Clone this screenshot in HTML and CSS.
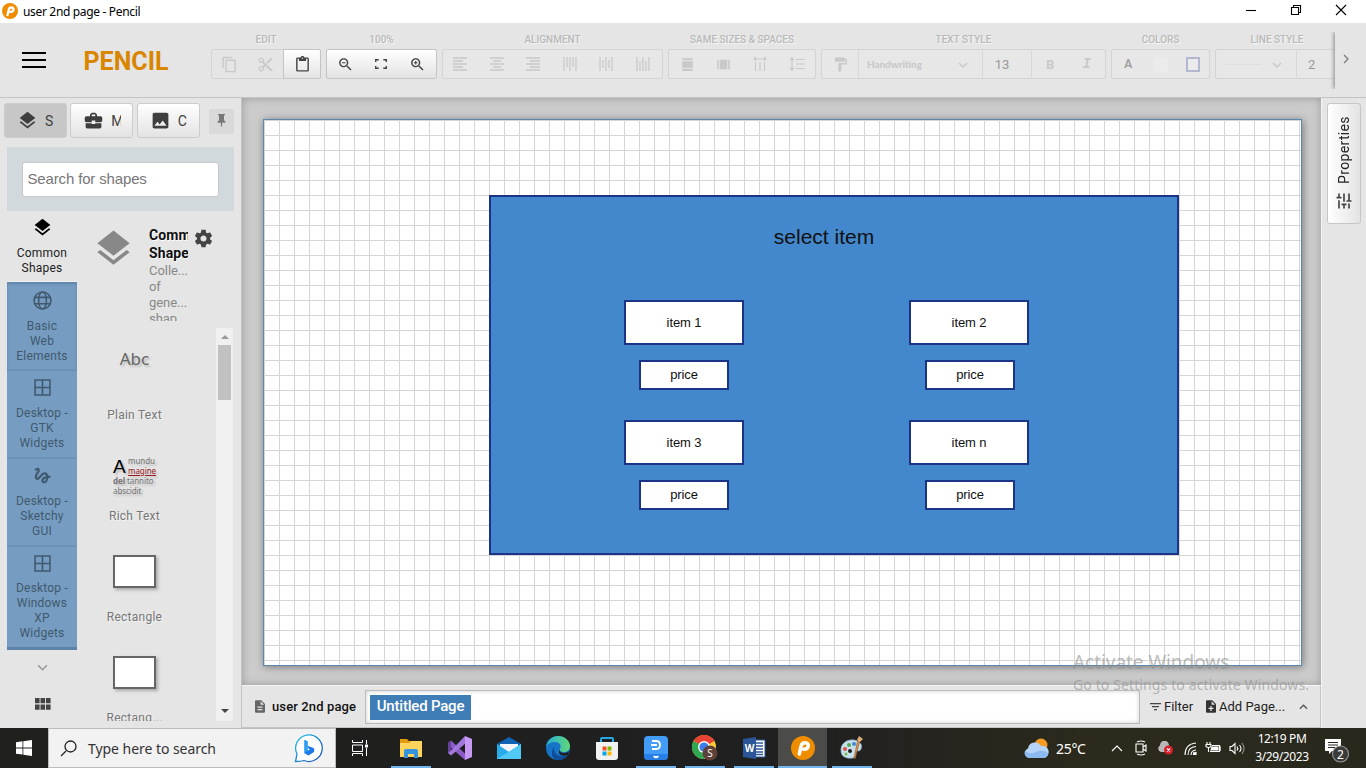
FILE: index.html
```html
<!DOCTYPE html>
<html lang="en">
<head>
<meta charset="utf-8">
<title>user 2nd page - Pencil</title>
<link rel="stylesheet" href="styles.css">
</head>
<body>
<svg class="defs" width="0" height="0">
  <symbol id="layers" viewBox="0 0 24 24"><path d="M11.99 18.54l-7.37-5.73L3 14.07l9 7 9-7-1.63-1.27-7.38 5.74zM12 16l7.36-5.73L21 9l-9-7-9 7 1.63 1.27L12 16z"/></symbol>
  <symbol id="logo" viewBox="0 0 24 24"><circle cx="12" cy="12" r="12" fill="#f08c00"/><path d="M8.300 18L10 10.500C10.500 8 11.800 6.800 14 6.800C16.500 6.800 17.600 8.200 17.200 10.200C16.800 12.400 15 13.500 12.500 13.200" fill="none" stroke="#fff" stroke-width="3.500" stroke-linecap="round"/></symbol>
  <symbol id="grid4" viewBox="0 0 16 16"><path d="M1 1h14v14H1zM8 1v14M1 8h14" fill="none" stroke="currentColor" stroke-width="1.500"/></symbol>
  <symbol id="down" viewBox="0 0 10 6"><path d="M1 1l4 4 4-4" fill="none" stroke="currentColor" stroke-width="1.400"/></symbol>
</svg>

<header class="titlebar">
  <svg class="title-logo"><use href="#logo"/></svg>
  <span class="title-text">user 2nd page - Pencil</span>
  <div class="window-buttons">
    <svg viewBox="0 0 12 12"><path d="M1 6.500h10"/></svg>
    <svg viewBox="0 0 12 12"><path d="M1.500 3.500h7v7h-7zM3.500 3v-1.500h7v7H9"/></svg>
    <svg viewBox="0 0 12 12"><path d="M1 1l10 10M11 1L1 11"/></svg>
  </div>
</header>

<nav class="toolbar">
  <svg class="hamburger" viewBox="0 0 24 16"><path d="M0 1h24M0 8h24M0 15h24" stroke="#000" stroke-width="2"/></svg>
  <div class="brand">PENCIL</div>
  <div class="groups">
    <section class="group w-edit"><h2>EDIT</h2>
      <div class="buttons">
        <span class="btn faded"><svg viewBox="0 0 24 24"><path d="M16 1H4c-1.100 0-2 .9-2 2v14h2V3h12V1zm3 4H8c-1.100 0-2 .9-2 2v14c0 1.100.9 2 2 2h11c1.100 0 2-.9 2-2V7c0-1.100-.9-2-2-2zm0 16H8V7h11v14z"/></svg></span>
        <span class="btn faded"><svg viewBox="0 0 24 24"><path d="M9.640 7.640c.23-.5.36-1.050.36-1.640 0-2.210-1.790-4-4-4S2 3.790 2 6s1.790 4 4 4c.59 0 1.140-.13 1.640-.36L10 12l-2.360 2.360C7.140 14.130 6.590 14 6 14c-2.210 0-4 1.790-4 4s1.790 4 4 4 4-1.790 4-4c0-.59-.13-1.140-.36-1.640L12 14l7 7h3v-1L9.640 7.640zM6 8c-1.100 0-2-.89-2-2s.9-2 2-2 2 .89 2 2-.9 2-2 2zm0 12c-1.100 0-2-.89-2-2s.9-2 2-2 2 .89 2 2-.9 2-2 2zM19 3l-6 6 2 2 7-7V3z"/></svg></span>
        <span class="btn raised"><svg viewBox="0 0 24 24"><path d="M19 2h-4.180C14.400.84 13.300 0 12 0c-1.300 0-2.400.84-2.820 2H5c-1.100 0-2 .9-2 2v16c0 1.100.9 2 2 2h14c1.100 0 2-.9 2-2V4c0-1.100-.9-2-2-2zm-7 0c.55 0 1 .45 1 1s-.45 1-1 1-1-.45-1-1 .45-1 1-1zm7 18H5V4h2v3h10V4h2v16z"/></svg></span>
      </div>
    </section>
    <section class="group w-zoom"><h2>100%</h2>
      <div class="buttons lit">
        <span class="btn"><svg viewBox="0 0 24 24"><path d="M15.500 14h-.79l-.28-.27C15.410 12.590 16 11.110 16 9.500 16 5.910 13.090 3 9.500 3S3 5.910 3 9.500 5.910 16 9.500 16c1.610 0 3.090-.59 4.230-1.570l.27.28v.79l5 4.990L20.490 19l-4.990-5zm-6 0C7.010 14 5 11.990 5 9.500S7.010 5 9.500 5 14 7.010 14 9.500 11.990 14 9.500 14zM7 8.700h5v1.600H7z"/></svg></span>
        <span class="btn"><svg class="fit" viewBox="0 0 12 10"><path d="M.700 3V.700h3M8.300.700h3V3M11.300 7v2.300h-3M3.700 9.300h-3V7"/></svg></span>
        <span class="btn"><svg viewBox="0 0 24 24"><path d="M15.500 14h-.79l-.28-.27C15.410 12.590 16 11.110 16 9.500 16 5.910 13.090 3 9.500 3S3 5.910 3 9.500 5.910 16 9.500 16c1.610 0 3.090-.59 4.230-1.570l.27.28v.79l5 4.990L20.490 19l-4.990-5zm-6 0C7.010 14 5 11.990 5 9.500S7.010 5 9.500 5 14 7.010 14 9.500 11.990 14 9.500 14zM7 8.700h5v1.600H7zM8.700 7h1.600v5H8.700z"/></svg></span>
      </div>
    </section>
    <section class="group w-align faded"><h2>ALIGNMENT</h2>
      <div class="buttons">
        <span class="btn"><svg class="px" viewBox="0 0 14 14"><path d="M0 1h14M0 4h10M0 7h14M0 10h10M0 13h14"/></svg></span>
        <span class="btn"><svg class="px" viewBox="0 0 14 14"><path d="M0 1h14M3 4h8M0 7h14M3 10h8M0 13h14"/></svg></span>
        <span class="btn"><svg class="px" viewBox="0 0 14 14"><path d="M0 1h14M4 4h10M0 7h14M4 10h10M0 13h14"/></svg></span>
        <span class="btn"><svg class="px" viewBox="0 0 14 14"><path d="M1 0v14M4 0v10M7 0v14M10 0v10M13 0v14"/></svg></span>
        <span class="btn"><svg class="px" viewBox="0 0 14 14"><path d="M1 0v14M4 3v8M7 0v14M10 3v8M13 0v14"/></svg></span>
        <span class="btn"><svg class="px" viewBox="0 0 14 14"><path d="M1 0v14M4 4v10M7 0v14M10 4v10M13 0v14"/></svg></span>
      </div>
    </section>
    <section class="group w-same faded"><h2>SAME SIZES &amp; SPACES</h2>
      <div class="buttons">
        <span class="btn"><svg viewBox="0 0 16 16"><path d="M3 2h10v2H3zM3 5h10v6H3zM3 12h10v2H3z"/></svg></span>
        <span class="btn"><svg viewBox="0 0 16 16"><path d="M2 3.500h1.500v9H2zM4.500 3.500h7v9h-7zM12.500 3.500H14v9h-1.500z"/></svg></span>
        <span class="btn"><svg class="thin" viewBox="0 0 16 16"><path d="M3.500 6v9M8 6v9M12.500 6v9M2 3h12M4 1L2 3l2 2M12 1l2 2-2 2"/></svg></span>
        <span class="btn"><svg class="thin" viewBox="0 0 16 16"><path d="M7 3.500h9M7 8h9M7 12.500h9M3 2v12M1 4l2-2 2 2M1 12l2 2 2-2"/></svg></span>
      </div>
    </section>
    <section class="group w-text faded"><h2>TEXT STYLE</h2>
      <div class="buttons">
        <span class="btn cell-paint"><svg viewBox="0 0 24 24"><path d="M18 4V3c0-.55-.45-1-1-1H5c-.55 0-1 .45-1 1v4c0 .55.45 1 1 1h12c.55 0 1-.45 1-1V6h1v4H9v11c0 .55.45 1 1 1h2c.55 0 1-.45 1-1v-9h8V4h-3z"/></svg></span>
        <span class="btn cell-font"><span class="font-name">Handwriting</span><svg class="chev"><use href="#down"/></svg></span>
        <span class="btn cell-size">13</span>
        <span class="btn glyph bold">B</span>
        <span class="btn glyph italic">I</span>
      </div>
    </section>
    <section class="group w-colors faded"><h2>COLORS</h2>
      <div class="buttons">
        <span class="btn glyph letter-a">A</span>
        <span class="btn"><i class="swatch"></i></span>
        <span class="btn"><i class="swatch outlined"></i></span>
      </div>
    </section>
    <section class="group w-line faded"><h2>LINE STYLE</h2>
      <div class="buttons">
        <span class="btn cell-line"><i class="line"></i><svg class="chev"><use href="#down"/></svg></span>
        <span class="btn cell-two">2</span>
      </div>
    </section>
  </div>
  <div class="more"><svg viewBox="0 0 6 10"><path d="M1 1l4 4-4 4"/></svg></div>
</nav>

<main class="workspace">
  <aside class="left">
    <div class="tabs">
      <span class="tab active"><svg><use href="#layers"/></svg><b>S</b></span>
      <span class="tab"><svg viewBox="0 0 24 24"><path d="M10 16v-1H3.010L3 19c0 1.110.89 2 2 2h14c1.110 0 2-.89 2-2v-4h-7v1h-4zm10-9h-4.010V5l-2-2h-4l-2 2v2H4c-1.100 0-2 .9-2 2v3c0 1.110.89 2 2 2h6v-2h4v2h6c1.100 0 2-.9 2-2V9c0-1.100-.9-2-2-2zm-6 0h-4V5h4v2z"/></svg><b>M</b></span>
      <span class="tab"><svg viewBox="0 0 24 24"><path d="M21 19V5c0-1.100-.9-2-2-2H5c-1.100 0-2 .9-2 2v14c0 1.100.9 2 2 2h14c1.100 0 2-.9 2-2zM8.500 13.500l2.500 3.010L14.500 12l4.500 6H5l3.500-4.500z"/></svg><b>C</b></span>
      <span class="pin"><svg viewBox="0 0 9 13"><path d="M1 0h7v1.300H7v5l1.500 1.500v.9H5.100V12l-.6 1-.6-1V8.700H.5v-.9L2 6.300v-5H1z"/></svg></span>
    </div>
    <div class="search"><div class="field">Search for shapes</div></div>
    <div class="library">
      <div class="categories">
        <div class="cat current"><svg><use href="#layers"/></svg>Common<br>Shapes</div>
        <div class="cat web"><svg viewBox="0 0 18 18"><g fill="none" stroke="currentColor" stroke-width="1.500"><circle cx="9" cy="9" r="8"/><ellipse cx="9" cy="9" rx="3.700" ry="8"/><path d="M1.700 6h14.600M1.700 12h14.600"/></g></svg>Basic<br>Web<br>Elements</div>
        <div class="cat"><svg><use href="#grid4"/></svg>Desktop -<br>GTK<br>Widgets</div>
        <div class="cat sketch"><svg viewBox="0 0 24 24"><path d="M4.590 6.890c.7-.71 1.400-1.350 1.710-1.220.5.2 0 1.030-.3 1.520-.25.42-2.860 3.890-2.860 6.310 0 1.280.48 2.340 1.340 2.980.75.56 1.740.73 2.640.46 1.070-.31 1.950-1.400 3.060-2.770 1.210-1.490 2.830-3.440 4.080-3.440 1.630 0 1.650 1.010 1.760 1.790-3.780.64-5.380 3.670-5.380 5.370 0 1.700 1.440 3.090 3.210 3.090 1.630 0 4.290-1.330 4.690-6.100H21v-2.500h-2.470c-.15-1.650-1.090-4.200-4.030-4.200-2.250 0-4.180 1.910-4.940 2.840-.58.73-2.060 2.480-2.290 2.720-.25.3-.68.84-1.110.84-.45 0-.72-.83-.36-1.920.35-1.090 1.400-2.860 1.850-3.520.78-1.140 1.300-1.920 1.300-3.280C8.950 3.690 7.310 3 6.440 3 5.120 3 3.970 4 3.720 4.250c-.36.36-.66.66-.88.93l1.750 1.710zm9.290 11.660c-.31 0-.74-.26-.74-.72 0-.6.73-2.200 2.870-2.760-.3 2.690-1.430 3.480-2.130 3.480z"/></svg>Desktop -<br>Sketchy<br>GUI</div>
        <div class="cat last"><svg><use href="#grid4"/></svg>Desktop -<br>Windows<br>XP<br>Widgets</div>
        <svg class="cat-more"><use href="#down"/></svg>
        <svg class="cat-grid" viewBox="0 0 16 12"><path d="M0 0h4.600v5.300H0zM5.500 0h4.600v5.300H5.500zM11 0h4.600v5.300H11zM0 6.500h4.600v5.300H0zM5.500 6.500h4.600v5.300H5.500zM11 6.500h4.600v5.300H11z"/></svg>
      </div>
      <div class="collection">
        <div class="summary">
          <svg class="big-layers"><use href="#layers"/></svg>
          <div class="about"><strong>Common<br>Shapes</strong><p>Colle...<br>of<br>gene...<br>shap</p></div>
          <svg class="gear" viewBox="0 0 24 24"><path d="M19.430 12.980c.04-.32.07-.64.07-.98s-.03-.66-.07-.98l2.110-1.650c.19-.15.24-.42.12-.64l-2-3.460c-.12-.22-.39-.3-.61-.22l-2.490 1c-.52-.4-1.080-.73-1.690-.98l-.38-2.650C14.460 2.180 14.250 2 14 2h-4c-.25 0-.46.18-.49.42l-.38 2.650c-.61.25-1.170.59-1.690.98l-2.490-1c-.23-.09-.49 0-.61.22l-2 3.460c-.13.22-.07.49.12.64l2.110 1.650c-.04.32-.07.65-.07.98s.03.66.07.98l-2.110 1.650c-.19.15-.24.42-.12.64l2 3.460c.12.22.39.3.61.22l2.490-1c.52.4 1.080.73 1.690.98l.38 2.650c.03.24.24.42.49.42h4c.25 0 .46-.18.49-.42l.38-2.650c.61-.25 1.170-.59 1.690-.98l2.490 1c.23.09.49 0 .61-.22l2-3.460c.12-.22.07-.49-.12-.64l-2.110-1.650zM12 15.500c-1.930 0-3.500-1.570-3.500-3.500s1.570-3.500 3.500-3.500 3.500 1.570 3.500 3.500-1.570 3.500-3.500 3.500z"/></svg>
        </div>
        <div class="shapes">
          <div class="shape-list">
            <div class="shape"><div class="thumb abc">Abc</div><span>Plain Text</span></div>
            <div class="shape"><div class="thumb"><div class="rich"><div class="rich-top"><em>A</em><div>mundu<br><u>magine</u></div></div><div><b>del</b> tannito<br>abscidit</div></div></div><span>Rich Text</span></div>
            <div class="shape"><div class="thumb"><i class="rect"></i></div><span>Rectangle</span></div>
            <div class="shape"><div class="thumb"><i class="rect"></i></div><span>Rectang...</span></div>
          </div>
          <div class="scrollbar"><i class="arrow up"></i><i class="grip"></i><i class="arrow dn"></i></div>
        </div>
      </div>
    </div>
  </aside>

  <section class="center">
    <div class="stage">
      <div class="sheet">
        <div class="node panel"></div>
        <div class="node heading">select item</div>
        <div class="node item i1">item 1</div>
        <div class="node item i2">item 2</div>
        <div class="node item i3">item 3</div>
        <div class="node item i4">item n</div>
        <div class="node price p1">price</div>
        <div class="node price p2">price</div>
        <div class="node price p3">price</div>
        <div class="node price p4">price</div>
      </div>
    </div>
    <footer class="pages">
      <svg class="doc" viewBox="4 2 16 20"><path d="M14 2H6c-1.100 0-1.990.9-1.990 2L4 20c0 1.100.89 2 1.990 2H18c1.100 0 2-.9 2-2V8l-6-6zm2 16H8v-2h8v2zm0-4H8v-2h8v2zm-3-5V3.500L18.500 9H13z"/></svg>
      <span class="doc-name">user 2nd page</span>
      <div class="page-strip"><span class="page-chip">Untitled Page</span></div>
      <div class="page-actions">
        <svg class="filter" viewBox="0 0 11 8"><path d="M0 .700h11M2 3.700h7M4 6.700h3"/></svg><span>Filter</span>
        <svg class="add" viewBox="4 2 16 20"><path d="M14 2H6c-1.100 0-1.990.9-1.990 2L4 20c0 1.100.89 2 1.990 2H18c1.100 0 2-.9 2-2V8l-6-6zm2 14h-3v3h-2v-3H8v-2h3v-3h2v3h3v2zm-3-7V3.500L18.500 9H13z"/></svg><span>Add Page...</span>
        <svg class="collapse"><use href="#down"/></svg>
      </div>
    </footer>
    <div class="watermark"><div>Activate Windows</div><p>Go to Settings to activate Windows.</p></div>
  </section>

  <aside class="right">
    <div class="props"><svg viewBox="0 0 24 24"><path d="M3 17v2h6v-2H3zM3 5v2h10V5H3zm10 16v-2h8v-2h-8v-2h-2v6h2zM7 9v2H3v2h4v2h2V9H7zm14 4v-2H11v2h10zm-6-4h2V7h4V5h-4V3h-2v6z"/></svg><span>Properties</span></div>
  </aside>
</main>

<footer class="taskbar">
  <div class="start"><svg viewBox="0 0 16 16"><path d="M0 2.200L6.500 1.300v6.200H0zM7.300 1.200L16 0v7.500H7.300zM0 8.400h6.500v6.200L0 13.700zM7.300 8.400H16V16l-8.700-1.200z" fill="#fff"/></svg></div>
  <div class="win-search">
    <svg class="lens" viewBox="0 0 17 17"><path d="M6 11L1 16" /><circle cx="10.500" cy="6.500" r="5.500"/></svg>
    <span>Type here to search</span>
    <svg class="bing" viewBox="0 0 30 30"><defs><linearGradient id="ring" x1="0" y1="0" x2="1" y2="1"><stop offset="0" stop-color="#22c5e8"/><stop offset="1" stop-color="#1c49b8"/></linearGradient></defs><path d="M1.500 28.500L3 21A13.300 13.300 0 1 1 10 27.500C7 28.500 4 28.500 1.500 28.500z" fill="#fff" stroke="url(#ring)" stroke-width="1.300"/><path d="M10.500 7l3 1.200v9.600l2.500-1.400-1.500-1-1-2.700 6 2.300q1.500 1.500.5 4L14.500 22.500l-4-2.200z" fill="#1d78e8"/><path d="M10.500 7l3 1.200v9.600l-3 2.500z" fill="#27a0f2"/></svg>
  </div>
  <div class="task-view"><svg viewBox="0 0 16 16"><path d="M.500 0v2.500h10V0M.500 5h10v6.500H.500zM.500 16v-2.500h10V16M14.500 0v4M14.500 8v8" fill="none" stroke="#fff"/><path d="M13 4.500h3v3h-3z" fill="#fff"/></svg></div>
  <div class="apps">
    <span class="app open"><svg viewBox="0 0 24 24"><path d="M1 3h7l2 2h3v3H1z" fill="#e49b0f"/><path d="M1 7h9l2-2h11v16H1z" fill="#ffd45c"/><path d="M5 22v-7q0-2 2-2h10q2 0 2 2v7h-4v-4H9v4z" fill="#3694df"/></svg></span>
    <span class="app"><svg viewBox="0 0 24 24"><path d="M0 7l3-2.500 15 14L17 24 0 9z" fill="#8a5bc9"/><path d="M0 7l3-2.500V19L0 17z" fill="#67419a"/><path d="M17 0L2 15.500 0 17l3 2.500L18 7z" fill="#a177dc"/><path d="M17 0l7 3v18l-7 3z" fill="#c798f4"/></svg></span>
    <span class="app"><svg viewBox="0 0 24 24"><path d="M0 8l12-7 12 7v5H0z" fill="#0f64b5"/><path d="M3 8h18v6l-9 4-9-4z" fill="#f4f7fa"/><path d="M0 8l12 8 12-8v15H0z" fill="#28abea"/><path d="M0 23L24 8v15z" fill="#50caf5"/></svg></span>
    <span class="app"><svg viewBox="0 0 24 24"><defs><linearGradient id="wave"><stop stop-color="#26acd9"/><stop offset="1" stop-color="#61d877"/></linearGradient></defs><circle cx="12" cy="12" r="12" fill="#1674c9"/><path d="M0 11C1 4 6 0 12 0c7 0 12 5 12 10 0 4-3 6-6 6-3 0-5-1-4-3 2-4-1-7-5-7-4 0-8 2-9 5z" fill="url(#wave)"/><path d="M8 13c0 5 5 8 10 7 2 0 3-1 4-2-2 4-6 6-10 6C6 24 4 16 8 11z" fill="#104d98"/><path d="M14 13c-1 2 1 4 4 4 2 0 4-1 5-2l-1 4c-7 2-11-1-8-6z" fill="#202020"/></svg></span>
    <span class="app"><svg viewBox="0 0 24 24"><path d="M6 8V3q0-1 1-1h10q1 0 1 1v5" fill="none" stroke="#25a8e7" stroke-width="2"/><path d="M1 6h22v15q0 3-3 3H4q-3 0-3-3z" fill="#f1f1f1"/><path d="M7.500 10.500h4v4h-4z" fill="#f25022"/><path d="M12.500 10.500h4v4h-4z" fill="#7fba00"/><path d="M7.500 15.500h4v4h-4z" fill="#00a4ef"/><path d="M12.500 15.500h4v4h-4z" fill="#ffb900"/></svg></span>
    <span class="app open"><svg viewBox="0 0 24 24"><rect width="24" height="24" rx="4" fill="#439cf8"/><path d="M0 18h24v2q0 4-4 4H4q-4 0-4-4z" fill="#277fe7"/><path d="M8 5h4q4 0 4 4t-4 4H8M7 9h6" fill="none" stroke="#fff" stroke-width="1.800"/><path d="M9.500 20l1.500 1.500 1-1 1 1 1.500-1.500" fill="none" stroke="#fff" stroke-width="1.500"/></svg></span>
    <span class="app open"><svg class="chrome" viewBox="0 0 26 26"><circle cx="12" cy="12" r="12" fill="#ffcc35"/><path d="M12 12L1.600 6A12 12 0 0 1 22.400 6z" fill="#e94335"/><path d="M12 12L1.600 6A12 12 0 0 0 12 24l5-9z" fill="#30a852"/><circle cx="12" cy="12" r="6" fill="#fff"/><circle cx="12" cy="12" r="4.600" fill="#3b7de9"/><circle cx="18" cy="18" r="7.500" fill="#5d4037"/><text x="18" y="21.500" text-anchor="middle" font-size="10" fill="#fff">S</text></svg></span>
    <span class="app open"><svg viewBox="0 0 24 24"><path d="M12 4h11v17H12z" fill="#fff" stroke="#2b579a"/><path d="M14 7h7M14 10h7M14 13h7M14 16h7M14 18.500h7" stroke="#2b579a" stroke-width="1.300"/><path d="M1 3l13-2v22L1 21z" fill="#2b579a"/><text x="7.500" y="16" text-anchor="middle" font-size="10" font-weight="bold" fill="#fff">W</text></svg></span>
    <span class="app open focused"><svg><use href="#logo"/></svg></span>
    <span class="app open"><svg viewBox="0 0 24 24"><path d="M1 15C0 8 7 3 14 4c6 1 9 5 7 9-1 3-4 1-5 3-1 3 1 5-3 6-6 1-12-1-12-7z" fill="#c8dfec" stroke="#7da8bd" stroke-width=".7"/><circle cx="5" cy="13" r="2" fill="#df5140"/><circle cx="9" cy="9" r="2" fill="#53aa50"/><circle cx="14" cy="8" r="2" fill="#408bd2"/><circle cx="10" cy="15" r="2" fill="#202020"/><circle cx="6" cy="18" r="1.500" fill="#75b844"/><path d="M20 4l-5 19-1-1 4-19z" fill="#e49946" stroke="#8a4a20" stroke-width=".6"/><path d="M17 4l2-4 4 3-3 3z" fill="#dbae78"/></svg></span>
  </div>
  <div class="tray">
    <svg class="weather" viewBox="0 0 25 20"><circle cx="17" cy="7" r="6.500" fill="#f69b24"/><path d="M5 20a5 5 0 0 1-1-9.500A7 7 0 0 1 17 8a6 6 0 0 1 3 12z" fill="#b5d4f8"/><path d="M5 20a5 5 0 0 1-4-7q5 4 11 1t12 1a5 5 0 0 1-4 5z" fill="#8db9f1"/></svg>
    <span class="temp">25°C</span>
    <svg class="t-up" viewBox="0 0 12 7"><path d="M1 6l5-5 5 5"/></svg>
    <svg class="t-meet" viewBox="0 0 12 16"><path d="M1 4h7v8H1zM8 7l3-2v6L8 9M2 2q4-2 8 0M2 14q4 2 8 0"/></svg>
    <svg class="t-cloud" viewBox="0 0 16 14"><path d="M4 11a3.500 3.500 0 0 1-1-6.500A4.500 4.500 0 0 1 12 4v7z" fill="#b8b8b8"/><circle cx="11.500" cy="9" r="4.500" fill="#d9202c"/><path class="cross" d="M10 7.500l3 3M13 7.500l-3 3"/></svg>
    <svg class="t-wifi" viewBox="0 0 13 13"><path d="M1 13Q1 2 12 1M4 13Q4 5 12 4.500M7 13Q7 8.500 12 8"/><path d="M9.500 13l0-2 2.500-.5V13z" fill="#fff"/></svg>
    <svg class="t-bat" viewBox="0 0 16 12"><path d="M7 3.500h7.500v6H5M14.500 5H16v3h-1.500M2 0v2.500M5 0v2.500M1 2.500h5v2q-2.500 2-5 0zM3.500 6v4"/><path d="M7 5h6v3H6z" fill="#fff"/></svg>
    <svg class="t-vol" viewBox="0 0 16 13"><path d="M1 4.500h2l3-3v10l-3-3H1zM8 4.500q1.500 2 0 4M10.500 3q3 3.500 0 7"/><path d="M13 1q4 5.500 0 11" opacity=".5"/></svg>
    <div class="clock">12:19 PM<br>3/29/2023</div>
    <svg class="t-note" viewBox="0 0 25 25"><path d="M0 1h16v12H7l-3 3v-3H0z" fill="#fff"/><path d="M3 4.500h10M3 7h10M3 9.500h7" stroke="#282820"/><circle cx="15.500" cy="16" r="8" fill="#3b3b39" stroke="#999"/><text x="15.500" y="20.500" text-anchor="middle" font-size="12" fill="#fff">2</text></svg>
  </div>
</footer>
</body>
</html>
```
FILE: styles.css
```css
* { box-sizing: border-box; }
body { margin: 0; width: 1366px; height: 768px; overflow: hidden; display: flex; flex-direction: column; background: #e5e5e5; font-family: Roboto, sans-serif; color: #111; }
svg { display: block; fill: currentColor; flex: none; }
.defs { position: absolute; }
h2, p { margin: 0; }

.titlebar { height: 23px; flex: none; background: #fff; display: flex; align-items: center; padding-left: 2px; font: 12px "Noto Sans", sans-serif; color: #000; }
.title-logo { width: 16px; height: 16px; margin-top: -1px; }
.title-text { margin-left: 5px; letter-spacing: -.33px; }
.window-buttons { margin-left: auto; display: flex; gap: 33px; padding: 0 19px 3px 0; }
.window-buttons svg { width: 12px; height: 12px; fill: none; stroke: #000; stroke-width: 1.100; }

.toolbar { height: 75px; flex: none; display: flex; border-bottom: 1px solid #c4c4c4; }
.hamburger { width: 24px; height: 16px; margin: 29px 0 0 21.500px; }
.brand { width: 127px; padding: 24px 0 0 38px; font-size: 25px; line-height: 29px; font-weight: 700; color: #d98500; }
.groups { width: 1124px; margin-left: 38.500px; padding-top: 9px; display: flex; gap: 5px; overflow: hidden; }
.group { flex: none; }
.group h2 { height: 17px; font-size: 10px; line-height: 15px; font-weight: 500; text-align: center; color: #b9b9b9; text-shadow: 1px 1px #f5f5f5; white-space: nowrap; }
.buttons { height: 30px; display: flex; border: 1px solid #d4d4d4; border-radius: 2px; color: #444; }
.faded .buttons { background: #e7e7e7; }
.btn { flex: 1; display: flex; align-items: center; justify-content: center; }
.btn svg { width: 17px; height: 17px; }
.btn.faded, .faded .btn { color: #c9c9c9; }
.btn.faded { padding-right: 2px; }
.btn.raised { flex: 0 0 38px; margin: -1px; border: 1px solid #c4c4c4; background: linear-gradient(#fff, #e4e4e4); border-radius: 0 2px 2px 0; color: #444; }
.lit { background: linear-gradient(#fff, #e2e2e2); border-color: #c4c4c4; }
.btn svg.fit { width: 12px; height: 10px; fill: none; stroke: currentColor; stroke-width: 1.400; }
.btn svg.px { width: 14px; height: 14px; stroke: currentColor; stroke-width: 1.300; margin-left: -2px; }
.btn svg.thin { fill: none; stroke: currentColor; stroke-width: 1.200; width: 16px; height: 16px; }
.w-edit { width: 110px; }
.w-zoom { width: 111px; }
.w-align { width: 221px; }
.w-same { width: 148px; }
.w-text { width: 285px; }
.w-colors { width: 99px; }
.w-line { width: 124px; }
.btn.cell-paint { flex: 0 0 37px; border-right: 1px solid #d8d8d8; }
.btn.cell-font { flex: 0 0 124px; border-right: 1px solid #d8d8d8; justify-content: space-between; padding: 0 14px 0 8px; }
.font-name { font: 900 10px Lato, sans-serif; letter-spacing: -.1px; }
.btn svg.chev { width: 10px; height: 6px; margin-top: 1px; }
.faded .btn.cell-size { flex: 0 0 49px; border-right: 1px solid #d8d8d8; font-size: 13px; color: #999; padding-right: 10px; }
.glyph { font-size: 13px; font-weight: 700; }
.italic { font-family: "Liberation Mono", monospace; font-style: italic; font-size: 14px; }
.faded .btn.letter-a { font-size: 12px; font-weight: 500; color: #999; }
.swatch { width: 15px; height: 15px; background: #ebebeb; }
.swatch.outlined { width: 14px; height: 15px; border: 2px solid #b2b8d0; }
.btn.cell-line { flex: 0 0 81px; border-right: 1px solid #d8d8d8; justify-content: space-between; padding: 0 14px 0 9px; }
.line { width: 37px; height: 1px; background: #dedede; }
.faded .btn.cell-two { font-size: 13px; color: #999; justify-content: flex-start; padding-left: 11px; }
.more { flex: 1; height: 57px; margin-top: 9px; display: flex; align-items: center; padding: 0 0 4px 8px; background: #e5e5e5; box-shadow: -1px 0 4px #888; clip-path: inset(0 0 0 -5px); }
.more svg { width: 6px; height: 10px; fill: none; stroke: #777; stroke-width: 1.200; }

.workspace { height: 630px; flex: none; display: flex; }
.left { width: 242px; flex: none; border-right: 1px solid #c4c4c4; padding: 5px 7px 0 4px; }
.tabs { display: flex; gap: 3.500px; height: 35px; }
.tab { width: 63px; display: flex; align-items: center; gap: 7px; padding-left: 12px; border: 1px solid #ccc; border-radius: 3px; background: linear-gradient(#fff, #e3e3e3); color: #3e3e3e; }
.tab.active { background: #c7c7c7; }
.tab svg { width: 21px; height: 21px; }
.tab b { width: 10px; overflow: hidden; font-size: 14px; font-weight: 400; }
.pin { width: 25px; height: 25px; margin: 6px 0 0 6px; background: #d9d9d9; border-radius: 2px; display: flex; justify-content: center; padding-top: 5px; color: #777; }
.pin svg { width: 9px; height: 13px; }
.search { margin: 9px 0 0 3px; height: 64px; background: #d1d9dd; padding: 15px; }
.field { width: 197px; height: 35px; border: 1px solid #c8c8c8; border-radius: 3px; background: #fff; padding-left: 4.500px; font: 15px/32px "Liberation Sans", sans-serif; letter-spacing: -.15px; color: #777; }
.library { display: flex; margin-left: 3px; }
.categories { width: 70px; }
.cat { height: 88px; padding-top: 8px; display: flex; flex-direction: column; align-items: center; text-align: center; background: #769dc1; border-bottom: 2px solid #6d94b8; font-size: 12px; line-height: 15px; letter-spacing: .2px; color: #40596e; }
.cat svg { width: 17px; height: 17px; margin-bottom: 10px; }
.cat.current { height: 71px; padding-top: 6px; background: #e5e5e5; border: 0; color: #222; box-shadow: inset 0 -1px #f1f1f1; }
.cat.current svg { width: 21px; height: 21px; margin-bottom: 8px; color: #000; }
.cat.web { height: 89px; padding-top: 9px; box-shadow: inset 0 2px 3px #5f83a7; }
.cat.web svg { width: 19px; height: 19px; margin-bottom: 9px; }
.cat.sketch { padding-top: 6px; }
.cat.sketch svg { width: 21px; height: 21px; margin-bottom: 8px; }
.cat.last { height: 103px; padding-top: 8px; border-bottom: 3px solid #5f83a7; }
.cat.last svg { margin-bottom: 9px; }
.cat-more { width: 11px; height: 7px; margin: 14px auto 0; color: #999; }
.cat-grid { width: 16px; height: 12px; margin: 27px auto 0; transform: translateX(1px); color: #444; }
.collection { width: 157px; }
.summary { height: 117px; padding: 15px 0 6px 15px; display: flex; overflow: hidden; }
.big-layers { width: 43px; height: 43px; color: #888; margin-top: 1px; }
.about { width: 39px; height: 95px; margin-left: 14px; overflow: hidden; font-size: 13px; color: #888; }
.about strong { display: block; font-size: 14px; line-height: 18px; font-weight: 700; letter-spacing: .1px; color: #111; text-shadow: 1px 1px #fff; }
.about p { font-size: 13px; line-height: 16px; letter-spacing: -.05px; padding-top: 1px; }
.gear { width: 21px; height: 21px; margin: 2px 0 0 5px; color: #444; }
.shapes { height: 393px; display: flex; overflow: hidden; }
.shape-list { width: 139px; padding-right: 24px; }
.shape { height: 101px; text-align: center; font-size: 12px; letter-spacing: .25px; color: #777; text-shadow: 1px 1px #f4f4f4; }
.thumb { height: 63px; margin-bottom: 16px; display: flex; align-items: center; justify-content: center; }
.shape > span { display: block; line-height: 16px; }
.abc { font: 17px "Noto Sans", sans-serif; letter-spacing: 0; color: #666; text-shadow: 2px 2px 2px #bbb; padding-bottom: 2px; }
.rich { width: 43px; margin-top: 31px; font: 8px/10px "Noto Sans", sans-serif; letter-spacing: -.08px; text-align: left; text-shadow: 2px 2px 2px #bbb; white-space: nowrap; }
.rich-top { display: flex; height: 20px; }
.rich-top em { width: 15px; font: 19px/22px "Liberation Sans", sans-serif; color: #000; }
.rich u { color: #9b1b24; }
.rect { width: 43px; height: 33px; margin-top: 20px; border: 2px solid #666; background: #fff; box-shadow: 2px 2px 3px #aaa; }
.scrollbar { width: 17px; background: #f0f0f0; display: flex; flex-direction: column; align-items: center; }
.arrow { border: 4px solid transparent; border-top: 0; border-bottom: 4px solid #999; margin: 7px 0 6px; }
.grip { width: 13px; height: 55px; background: #c1c1c1; }
.arrow.dn { border-top: 4px solid #444; border-bottom: 0; margin-top: auto; margin-bottom: 8px; }

.center { width: 1079px; position: relative; display: flex; flex-direction: column; }
.stage { height: 587px; padding: 21px; background: #ccc; box-shadow: inset 0 0 9px #999; }
.sheet { position: relative; width: 1039px; height: 547px; border: 1px solid #5b88b0; background: linear-gradient(90deg, #d5d5d5 1px, transparent 1px) 0 0 / 15px 15px, linear-gradient(#d5d5d5 1px, #fff 1px) 0 0 / 15px 15px; box-shadow: 1px 1px 8px #777; }
.node { position: absolute; display: flex; align-items: center; justify-content: center; font: 13px "Liberation Sans", sans-serif; letter-spacing: -.1px; color: #111; }
.panel { left: 225px; top: 75px; width: 690px; height: 360px; background: #4388cc; border: 2px solid #1b3487; }
.heading { left: 500px; top: 104px; width: 120px; height: 26px; font-size: 21px; letter-spacing: 0; }
.item, .price { background: #fff; border: 2px solid #1b3487; }
.item { width: 120px; height: 45px; }
.price { width: 90px; height: 30px; padding-bottom: 2px; }
.i1 { left: 360px; top: 180px; }
.i2 { left: 645px; top: 180px; }
.i3 { left: 360px; top: 300px; }
.i4 { left: 645px; top: 300px; }
.p1 { left: 375px; top: 240px; }
.p2 { left: 661px; top: 240px; }
.p3 { left: 375px; top: 360px; }
.p4 { left: 661px; top: 360px; }
.pages { height: 43px; display: flex; align-items: center; padding-left: 13px; border-top: 1px solid #f6f6f6; border-right: 1px solid #c4c4c4; border-bottom: 1px solid #c4c4c4; }
.doc { width: 10px; height: 13px; color: #666; }
.doc-name { width: 93px; margin-left: 7px; font-size: 13px; letter-spacing: .12px; font-weight: 500; white-space: nowrap; }
.page-strip { width: 775px; height: 34px; background: #fff; border: 1px solid #bbb; box-shadow: inset 0 0 4px #ccc; padding: 4px; }
.page-chip { display: block; width: 101px; height: 25px; background: #3f7db6; color: #fff; font-size: 15px; line-height: 23px; font-weight: 500; text-align: center; letter-spacing: -.2px; }
.page-actions { display: flex; align-items: center; margin-left: 10px; font-size: 13px; color: #222; white-space: nowrap; }
.filter { width: 11px; height: 8px; margin-right: 3px; stroke: #444; stroke-width: 1.200; }
.add { width: 10px; height: 13px; margin: 0 3px 0 13px; color: #333; }
.collapse { width: 9px; height: 6px; margin-left: 14px; transform: rotate(180deg); color: #555; }
.watermark { position: absolute; left: 831px; top: 551px; width: 240px; color: rgba(145,145,145,.62); font-family: "Noto Sans", sans-serif; }
.watermark div { font-size: 19px; line-height: 27px; letter-spacing: -.05px; }
.watermark p { font-size: 14px; line-height: 18px; letter-spacing: .12px; white-space: nowrap; }

.right { width: 45px; padding: 5px 6px 5px 4.500px; border-left: 1px solid #f5f5f5; }
.props { width: 34px; height: 121px; border: 1px solid #c6c6c6; border-radius: 3px; background: linear-gradient(270deg, #fff, #e3e3e3); writing-mode: vertical-rl; transform: rotate(180deg); display: flex; align-items: center; padding-top: 12px; gap: 7px; font-size: 14px; letter-spacing: .35px; color: #222; }
.props svg { width: 20px; height: 20px; transform: rotate(90deg); color: #444; }

.taskbar { height: 40px; flex: none; display: flex; background: linear-gradient(90deg, #20211d, #1e1f1e 38%, #202020 60%, #2c2a1c 80%, #28281d); color: #fff; font-family: "Noto Sans", sans-serif; }
.start { width: 48px; display: grid; place-items: center; }
.start svg { width: 16px; height: 16px; }
.win-search { width: 288px; display: flex; align-items: center; background: #f2f2f2; border: 1px solid #bbb; padding-left: 11px; font-size: 14px; color: #333; }
.lens { width: 17px; height: 17px; fill: none; stroke: #222; stroke-width: 1.300; }
.win-search span { width: 204px; margin-left: 11px; letter-spacing: -.05px; white-space: nowrap; }
.bing { width: 30px; height: 30px; margin-left: 2px; }
.task-view { width: 50px; display: flex; align-items: center; padding-left: 16px; }
.task-view svg { width: 16px; height: 16px; }
.apps { display: flex; }
.app { width: 49px; display: flex; align-items: center; justify-content: center; }
.app svg { width: 24px; height: 24px; }
.app .chrome { width: 26px; height: 26px; }
.app.open { background: linear-gradient(#72b5ee, #72b5ee) 5px 38px / 40px 2px no-repeat; }
.app.focused { background: linear-gradient(#72b5ee, #72b5ee) 0 38px / 49px 2px no-repeat, #4b4b49; }
.tray { width: 342px; margin-left: auto; display: flex; align-items: center; font-size: 13px; }
.tray svg { fill: none; stroke: #fff; stroke-width: 1.100; }
.tray .weather { width: 25px; height: 20px; stroke: none; }
.tray text { stroke: none; }
.temp { width: 48px; flex: none; margin-left: 7px; font-size: 14px; letter-spacing: -.3px; }
.t-up { width: 12px; height: 7px; margin-left: 7px; }
.t-meet { width: 12px; height: 16px; margin-left: 12px; }
.tray .t-cloud { width: 16px; height: 14px; margin-left: 10px; stroke: none; }
.t-cloud .cross { stroke: #fff; }
.t-wifi { width: 13px; height: 13px; margin-left: 11px; }
.t-bat { width: 16px; height: 12px; margin-left: 8px; }
.t-vol { width: 16px; height: 13px; margin-left: 8px; }
.clock { width: 66px; flex: none; margin-left: 4px; font-size: 12px; line-height: 18px; letter-spacing: -.4px; text-align: center; white-space: nowrap; }
.tray .t-note { width: 25px; height: 25px; margin: 5px 0 0 10px; stroke: none; }
```
